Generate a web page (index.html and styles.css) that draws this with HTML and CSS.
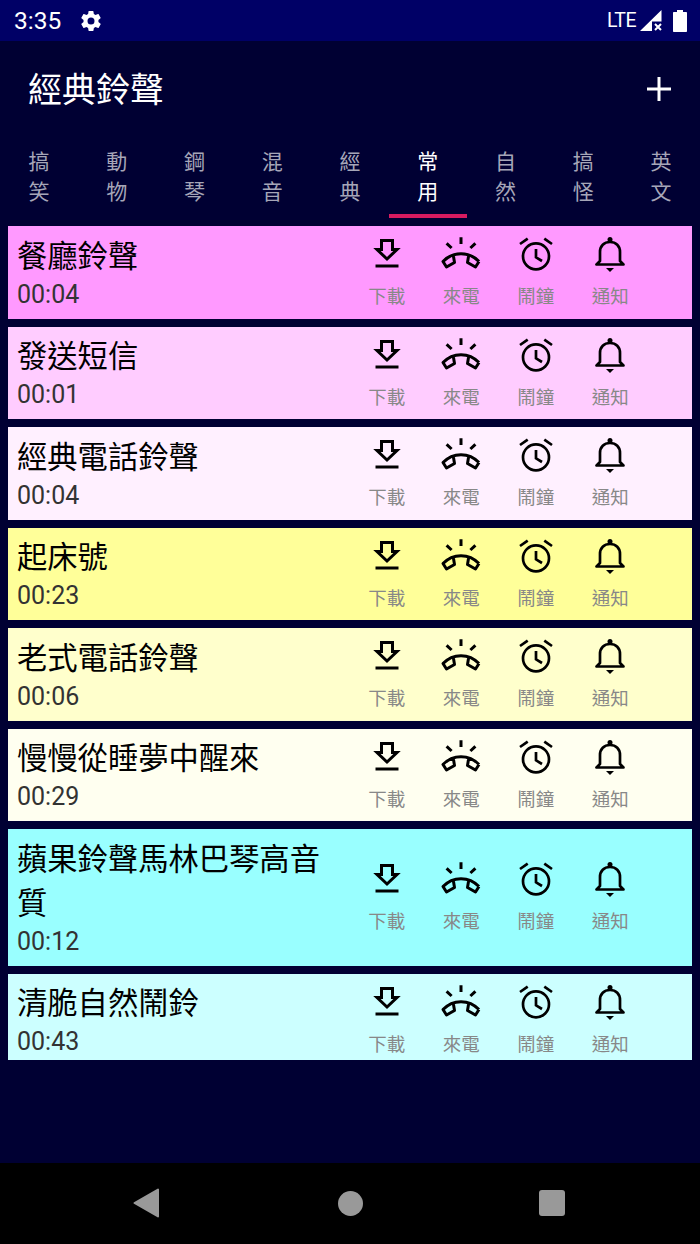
FILE: index.html
```html
<!DOCTYPE html>
<html lang="zh-TW" dir="ltr">
<head>
  <meta charset="utf-8">
  <title>經典鈴聲</title>
  <meta name="viewport" content="width=device-width, initial-scale=1">
  <link rel="stylesheet" href="styles.css">
</head>
<body>

<!-- 圖示 -->
<svg class="iconDefs" aria-hidden="true">
  <symbol id="iconDownload" viewBox="0 0 40 36">
    <path d="M14.500 4.500H25.500V13.500H30L20 23L10 13.500H14.500Z" fill="none" stroke="#000" stroke-width="3"/>
    <path d="M8.500 30H31.500" fill="none" stroke="#000" stroke-width="3"/>
  </symbol>
  <symbol id="iconCall" viewBox="0 0 40 36">
    <path d="M38 25.500C28 15 12 15 2 25.500L5.500 31L13.500 26.500L12.500 20.500M38 25.500L34.500 31L26.500 26.500L27.500 20.500" fill="none" stroke="#000" stroke-width="3" stroke-linejoin="round"/>
    <path d="M20 1.300V8M5.600 7.300L10.600 12M34.400 7.300L29.400 12" fill="none" stroke="#000" stroke-width="3"/>
  </symbol>
  <symbol id="iconAlarm" viewBox="0 0 40 36">
    <circle cx="20" cy="20.300" r="13" fill="none" stroke="#000" stroke-width="2.700"/>
    <path d="M4 8L11.700 2.700M36 8L28.300 2.700M20 13V21.300L26 25" fill="none" stroke="#000" stroke-width="2.700"/>
  </symbol>
  <symbol id="iconBell" viewBox="0 0 40 36">
    <path d="M6.500 28.500H33.500L30 25V16C30 10 26 6 20 6C14 6 10 10 10 16V25Z" fill="none" stroke="#000" stroke-width="2.700" stroke-linejoin="round"/>
    <circle cx="20" cy="3.500" r="2.500"/>
    <path d="M16 32H24L20 36Z"/>
  </symbol>
</svg>

<div class="page">
  <!-- 狀態列 -->
  <div class="statusBar">
    <span class="clock">3:35</span>
    <svg class="gear" viewBox="0 0 24 24"><path fill="#fff" d="M19.400 13c.04-.32.07-.66.07-1s-.03-.68-.07-1l2.100-1.650c.2-.15.25-.42.12-.64l-2-3.460c-.12-.22-.39-.3-.61-.22l-2.490 1c-.52-.4-1.080-.73-1.690-.98l-.38-2.650A.49.49 0 0 0 14 2h-4c-.25 0-.46.18-.49.42l-.38 2.650c-.61.25-1.170.59-1.690.98l-2.490-1c-.23-.09-.49 0-.61.22l-2 3.460c-.13.22-.07.49.12.64L4.570 11c-.04.32-.07.66-.07 1s.03.68.07 1l-2.110 1.650c-.19.15-.25.42-.12.64l2 3.460c.12.22.39.3.61.22l2.490-1c.52.4 1.080.73 1.690.98l.38 2.650c.03.24.24.42.49.42h4c.25 0 .46-.18.49-.42l.38-2.650c.61-.25 1.170-.59 1.690-.98l2.490 1c.23.09.49 0 .61-.22l2-3.460c.12-.22.07-.49-.12-.64L19.400 13zM12 15.500a3.500 3.500 0 1 1 0-7 3.500 3.500 0 0 1 0 7z"/></svg>
    <span class="lte">LTE</span>
    <svg class="signal" viewBox="0 0 22 22"><path fill="#fff" d="M21.500 0V11.500H12V21H0Z"/><path stroke="#fff" stroke-width="2" d="M15 14L21 20M21 14L15 20"/></svg>
    <svg class="battery" viewBox="0 0 14 22"><path fill="#fff" d="M4 0H10V2H13C13.600 2 14 2.400 14 3V21C14 21.600 13.600 22 13 22H1C.4 22 0 21.600 0 21V3C0 2.400 .4 2 1 2H4Z"/></svg>
  </div>

  <!-- 標題列 -->
  <div class="toolBar">
    <span class="toolTitle">經典鈴聲</span>
    <svg class="plus" viewBox="0 0 24 24"><path d="M12 0V24M0 12H24" stroke="#fff" stroke-width="3"/></svg>
  </div>

  <!-- 分類 -->
  <div class="tabs">
    <div class="tab">搞<br>笑</div>
    <div class="tab">動<br>物</div>
    <div class="tab">鋼<br>琴</div>
    <div class="tab">混<br>音</div>
    <div class="tab">經<br>典</div>
    <div class="tab active">常<br>用</div>
    <div class="tab">自<br>然</div>
    <div class="tab">搞<br>怪</div>
    <div class="tab">英<br>文</div>
  </div>

  <!-- 鈴聲清單 -->
  <div class="list">
    <div class="row color1">
      <div class="info"><div class="name">餐廳鈴聲</div><div class="time">00:04</div></div>
      <div class="actions">
        <div class="action"><svg class="icon"><use href="#iconDownload"/></svg><span>下載</span></div>
        <div class="action"><svg class="icon"><use href="#iconCall"/></svg><span>來電</span></div>
        <div class="action"><svg class="icon"><use href="#iconAlarm"/></svg><span>鬧鐘</span></div>
        <div class="action"><svg class="icon"><use href="#iconBell"/></svg><span>通知</span></div>
      </div>
    </div>
    <div class="row color2">
      <div class="info"><div class="name">發送短信</div><div class="time">00:01</div></div>
      <div class="actions">
        <div class="action"><svg class="icon"><use href="#iconDownload"/></svg><span>下載</span></div>
        <div class="action"><svg class="icon"><use href="#iconCall"/></svg><span>來電</span></div>
        <div class="action"><svg class="icon"><use href="#iconAlarm"/></svg><span>鬧鐘</span></div>
        <div class="action"><svg class="icon"><use href="#iconBell"/></svg><span>通知</span></div>
      </div>
    </div>
    <div class="row color3">
      <div class="info"><div class="name">經典電話鈴聲</div><div class="time">00:04</div></div>
      <div class="actions">
        <div class="action"><svg class="icon"><use href="#iconDownload"/></svg><span>下載</span></div>
        <div class="action"><svg class="icon"><use href="#iconCall"/></svg><span>來電</span></div>
        <div class="action"><svg class="icon"><use href="#iconAlarm"/></svg><span>鬧鐘</span></div>
        <div class="action"><svg class="icon"><use href="#iconBell"/></svg><span>通知</span></div>
      </div>
    </div>
    <div class="row color4">
      <div class="info"><div class="name">起床號</div><div class="time">00:23</div></div>
      <div class="actions">
        <div class="action"><svg class="icon"><use href="#iconDownload"/></svg><span>下載</span></div>
        <div class="action"><svg class="icon"><use href="#iconCall"/></svg><span>來電</span></div>
        <div class="action"><svg class="icon"><use href="#iconAlarm"/></svg><span>鬧鐘</span></div>
        <div class="action"><svg class="icon"><use href="#iconBell"/></svg><span>通知</span></div>
      </div>
    </div>
    <div class="row color5">
      <div class="info"><div class="name">老式電話鈴聲</div><div class="time">00:06</div></div>
      <div class="actions">
        <div class="action"><svg class="icon"><use href="#iconDownload"/></svg><span>下載</span></div>
        <div class="action"><svg class="icon"><use href="#iconCall"/></svg><span>來電</span></div>
        <div class="action"><svg class="icon"><use href="#iconAlarm"/></svg><span>鬧鐘</span></div>
        <div class="action"><svg class="icon"><use href="#iconBell"/></svg><span>通知</span></div>
      </div>
    </div>
    <div class="row color6">
      <div class="info"><div class="name">慢慢從睡夢中醒來</div><div class="time">00:29</div></div>
      <div class="actions">
        <div class="action"><svg class="icon"><use href="#iconDownload"/></svg><span>下載</span></div>
        <div class="action"><svg class="icon"><use href="#iconCall"/></svg><span>來電</span></div>
        <div class="action"><svg class="icon"><use href="#iconAlarm"/></svg><span>鬧鐘</span></div>
        <div class="action"><svg class="icon"><use href="#iconBell"/></svg><span>通知</span></div>
      </div>
    </div>
    <div class="row color7">
      <div class="info"><div class="name">蘋果鈴聲馬林巴琴高音質</div><div class="time">00:12</div></div>
      <div class="actions">
        <div class="action"><svg class="icon"><use href="#iconDownload"/></svg><span>下載</span></div>
        <div class="action"><svg class="icon"><use href="#iconCall"/></svg><span>來電</span></div>
        <div class="action"><svg class="icon"><use href="#iconAlarm"/></svg><span>鬧鐘</span></div>
        <div class="action"><svg class="icon"><use href="#iconBell"/></svg><span>通知</span></div>
      </div>
    </div>
    <div class="row color8 short">
      <div class="info"><div class="name">清脆自然鬧鈴</div><div class="time">00:43</div></div>
      <div class="actions">
        <div class="action"><svg class="icon"><use href="#iconDownload"/></svg><span>下載</span></div>
        <div class="action"><svg class="icon"><use href="#iconCall"/></svg><span>來電</span></div>
        <div class="action"><svg class="icon"><use href="#iconAlarm"/></svg><span>鬧鐘</span></div>
        <div class="action"><svg class="icon"><use href="#iconBell"/></svg><span>通知</span></div>
      </div>
    </div>
  </div>

  <!-- 導覽列 -->
  <div class="navBar">
    <svg class="navIcon" viewBox="0 0 26 30"><path fill="#999" d="M25 1.500V28.500L1.500 15Z" stroke="#999" stroke-width="2" stroke-linejoin="round"/></svg>
    <div class="navCircle"></div>
    <div class="navSquare"></div>
  </div>
</div>

</body>
</html>
```

FILE: styles.css
```css
/* 基本樣式 */
body {
  font-family: Roboto, "Noto Sans CJK TC", sans-serif;
  margin: 0;
  padding: 0;
  background-color: #000033;
  color: #000;
}

.iconDefs {
  display: none;
}

.page {
  display: flex;
  flex-direction: column;
  height: 1244px;
  overflow: hidden;
}

/* 狀態列 */
.statusBar {
  display: flex;
  align-items: center;
  height: 41px;
  padding: 0 13px 0 14px;
  background-color: #000066;
  color: #FFF;
}

.clock {
  font-size: 24.500px;
  width: 65px;
}

.gear {
  width: 24px;
  height: 24px;
}

.lte {
  margin-left: auto;
  font-size: 19.500px;
  letter-spacing: -0.5px;
}

.signal {
  width: 22px;
  height: 22px;
  margin-left: 4px;
}

.battery {
  width: 14px;
  height: 22px;
  margin-left: 11px;
}

/* 標題列 */
.toolBar {
  display: flex;
  align-items: center;
  justify-content: space-between;
  height: 95px;
  padding: 0 29px 0 28px;
  color: #FFF;
}

.toolTitle {
  font-size: 34px;
  margin-bottom: 2px;
}

.plus {
  width: 24px;
  height: 24px;
}

/* 分類 */
.tabs {
  display: grid;
  grid-template-columns: repeat(9, 1fr);
  height: 82px;
}

.tab {
  padding-top: 11px;
  font-size: 21px;
  line-height: 30px;
  text-align: center;
  color: #A6A6B8;
}

.tab.active {
  color: #FFF;
  border-bottom: 4px solid #D81B60;
}

/* 鈴聲清單 */
.list {
  flex: 1;
  display: flex;
  flex-direction: column;
  gap: 8px;
  padding: 8px 8px 0;
}

.row {
  display: flex;
  align-items: center;
  padding: 8.500px 44.500px 9px 9px;
}

.row.short {
  align-items: flex-start;
  padding-bottom: 2.500px;
}

.color1 { background-color: #FF99FF; }
.color2 { background-color: #FFCCFF; }
.color3 { background-color: #FFF0FF; }
.color4 { background-color: #FFFF99; }
.color5 { background-color: #FFFFCC; }
.color6 { background-color: #FFFFF0; }
.color7 { background-color: #99FFFF; }
.color8 { background-color: #CCFFFF; }

.info {
  flex: 1;
  min-width: 0;
}

.name {
  font-size: 30.300px;
  line-height: 44px;
  color: #000;
}

.time {
  font-size: 25px;
  line-height: 31px;
  color: #333;
}

.actions {
  display: flex;
  flex-shrink: 0;
  margin: 1px 0 -1px 8px;
}

.short .actions {
  margin-top: 1.500px;
}

.action {
  display: flex;
  flex-direction: column;
  align-items: center;
  width: 74.500px;
  font-size: 18.500px;
  line-height: 26px;
  color: #888;
}

.icon {
  display: block;
  width: 40px;
  height: 36px;
  margin-bottom: 12px;
}

/* 導覽列 */
.navBar {
  position: relative;
  height: 81px;
  background-color: #000;
  flex-shrink: 0;
}

.navIcon {
  position: absolute;
  left: 133px;
  top: 25px;
  width: 26px;
  height: 30px;
}

.navCircle {
  position: absolute;
  left: 338px;
  top: 28px;
  width: 25px;
  height: 25px;
  border-radius: 50%;
  background-color: #999;
}

.navSquare {
  position: absolute;
  left: 539px;
  top: 27px;
  width: 26px;
  height: 26px;
  border-radius: 3px;
  background-color: #999;
}
```
